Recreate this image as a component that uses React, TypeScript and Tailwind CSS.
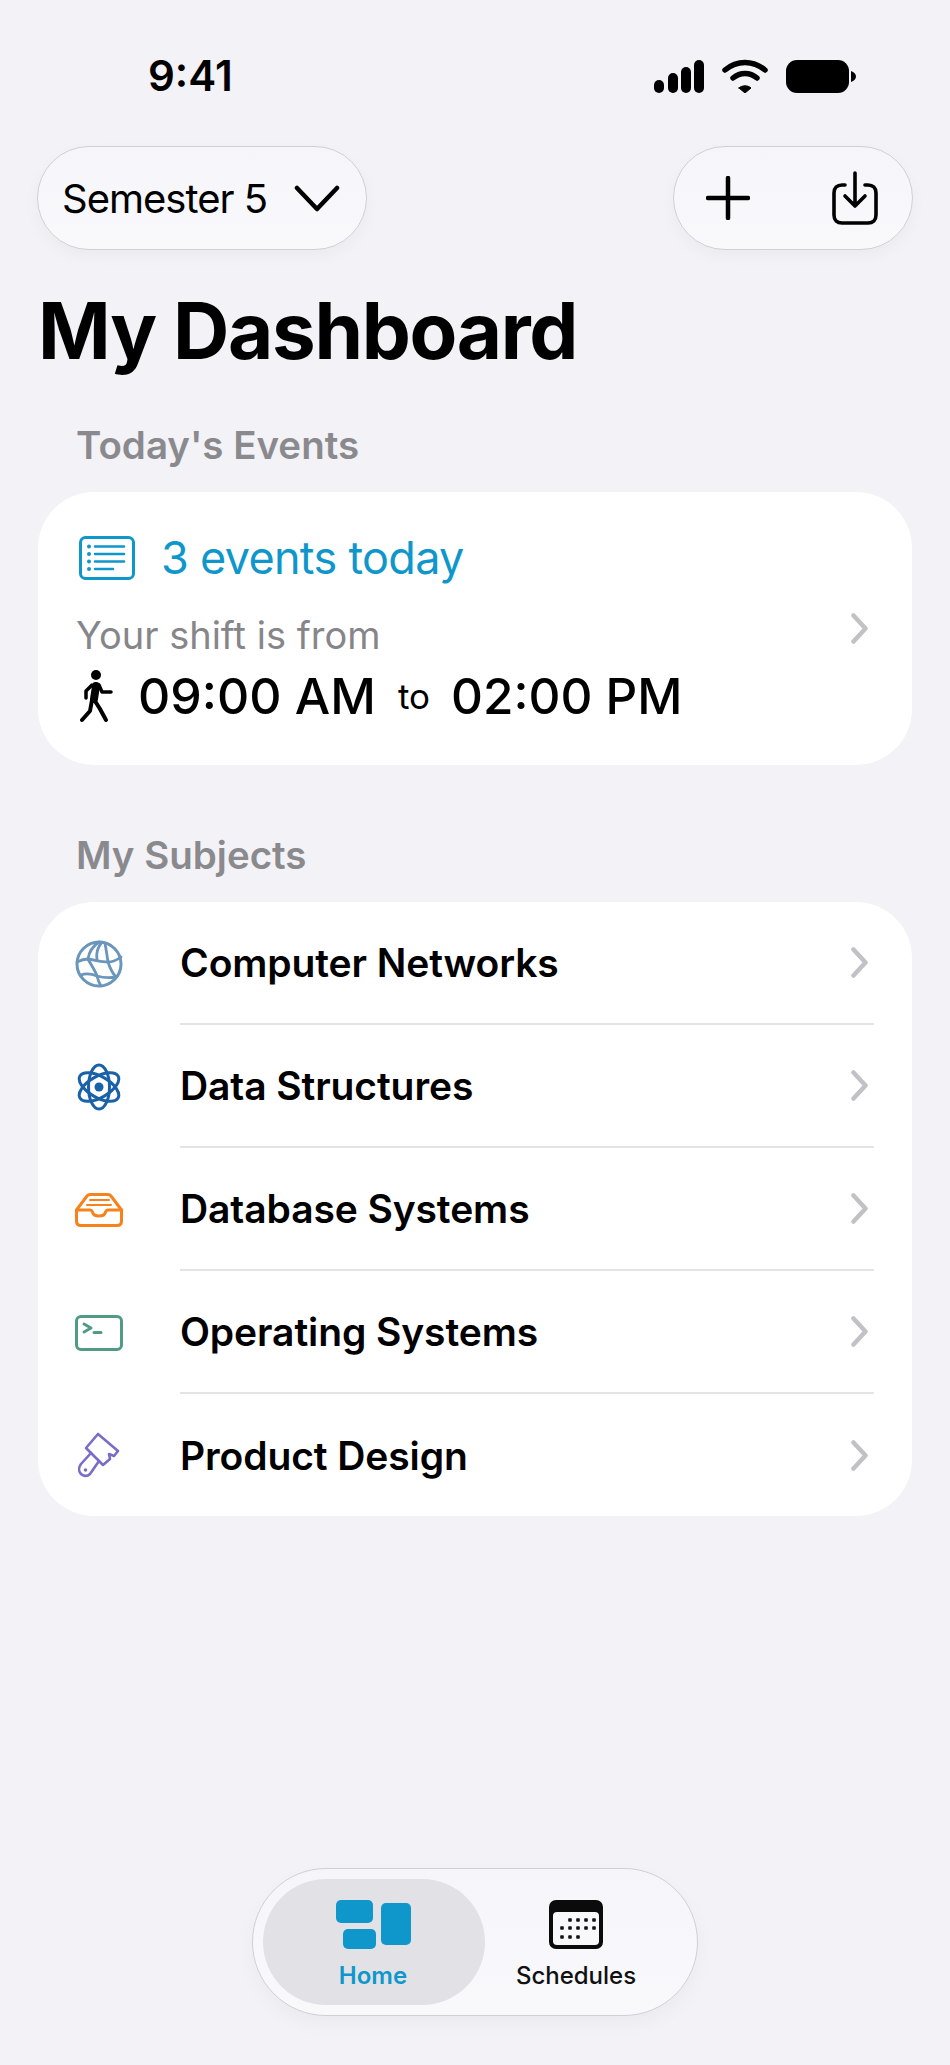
const subjects = [
  { name: "Computer Networks", icon: <GlobeIcon /> },
  { name: "Data Structures", icon: <AtomIcon /> },
  { name: "Database Systems", icon: <TrayIcon /> },
  { name: "Operating Systems", icon: <TerminalIcon /> },
  { name: "Product Design", icon: <BrushIcon /> },
];

function Chevron() {
  return (
    <svg width="17" height="31" viewBox="0 0 17 31" fill="none" stroke="#c2c2c6" strokeWidth="4.500" strokeLinecap="round" strokeLinejoin="round">
      <path d="m2.500 2.500 12 13-12 13" />
    </svg>
  );
}

function GlobeIcon() {
  return (
    <svg width="48" height="48" viewBox="0 0 48 48" fill="none" stroke="#6b96bb" strokeWidth="2.800" strokeLinecap="round">
      <circle cx="24" cy="24" r="22" strokeWidth="3" />
      <path d="M24 2C18 6 14 12 13 19M30 3c1 6 2 12 3 19" />
      <path d="M2 22c4-2 8-3 11-3 7 1 13 3 20 3 5 0 9-2 13-5" />
      <path d="M13 19c3 6 7 11 9 17 1 4 2 7 4 10M33 22c2 6 4 11 8 15" />
      <path d="M6 35c5-2 11-1 16 1 7 2 13 2 19 1M22 20c-1-6 0-12 5-18" />
    </svg>
  );
}

function AtomIcon() {
  return (
    <svg width="44" height="48" viewBox="0 0 44 48" fill="none" stroke="#1a62a8" strokeWidth="3">
      <ellipse cx="22" cy="24" rx="10.500" ry="22" />
      <ellipse cx="22" cy="24" rx="10.500" ry="22" transform="rotate(60 22 24)" />
      <ellipse cx="22" cy="24" rx="10.500" ry="22" transform="rotate(-60 22 24)" />
      <circle cx="22" cy="24" r="4.500" fill="#1a62a8" stroke="none" />
    </svg>
  );
}

function TrayIcon() {
  return (
    <svg width="48" height="34" viewBox="0 0 48 34" fill="none" stroke="#f7821b" strokeWidth="3" strokeLinejoin="round" strokeLinecap="round">
      <path d="M1.500 17 12 3c.8-1 1.500-1.500 3-1.500h18c1.500 0 2.200.5 3 1.500l10.500 14v11c0 3-1.500 4.500-4.500 4.500H6c-3 0-4.500-1.500-4.500-4.500z" />
      <path d="M1.500 17H15c1.500 0 2 1 2.500 2.200.8 2.500 3 3.800 6.500 3.800s5.700-1.300 6.500-3.800c.5-1.200 1-2.200 2.500-2.200h14" />
      <path d="M15 7h19M12 12h24" strokeWidth="2" />
    </svg>
  );
}

function TerminalIcon() {
  return (
    <svg width="48" height="36" viewBox="0 0 48 36" fill="none" stroke="#4f9b84" strokeWidth="3" strokeLinecap="round" strokeLinejoin="round">
      <rect x="1.500" y="1.500" width="45" height="33" rx="4.500" />
      <path d="m9 9 7 4-7 4M19 17.500h7" />
    </svg>
  );
}

function BrushIcon() {
  return (
    <svg width="42" height="46" viewBox="0 0 42 46" fill="none" stroke="#7b6cc8" strokeWidth="2.600" strokeLinejoin="round" strokeLinecap="round">
      <path d="M20 2 40 19l-4 5-5-2 1 5-7 6L8 16z" />
      <path d="M13 21 3 32c-3 4-2 8 0 10s6 3 9 0l9-13" />
      <circle cx="7.500" cy="38" r="1.800" fill="#7b6cc8" stroke="none" />
    </svg>
  );
}

function WalkIcon() {
  return (
    <svg width="33" height="53" viewBox="0 0 33 53" fill="none" stroke="#000" strokeLinecap="round" strokeLinejoin="round">
      <circle cx="16" cy="5" r="5" fill="#000" stroke="none" />
      <path d="M16 16 14 29" strokeWidth="8" />
      <path d="M12 15 6 21v7" strokeWidth="3.500" />
      <path d="m19 15 3 7h9" strokeWidth="3.500" />
      <path d="m12 30-2 11-8 9" strokeWidth="4" />
      <path d="m15 31 5 8 6 11" strokeWidth="4" />
    </svg>
  );
}

function HomeIcon() {
  return (
    <svg width="75" height="49" viewBox="0 0 75 49" fill="#0f97cb">
      <rect x="0" y="0" width="37" height="23" rx="5" />
      <rect x="7" y="29" width="33" height="20" rx="5" />
      <rect x="45" y="3" width="30" height="42" rx="5" />
    </svg>
  );
}

function CalendarIcon() {
  const dots = [
    [21, 20], [29, 20], [37, 20], [45, 20],
    [13, 28], [21, 28], [29, 28], [37, 28], [45, 28],
    [13, 37], [21, 37], [29, 37],
  ];
  return (
    <svg width="54" height="49" viewBox="0 0 54 49">
      <rect x="0" y="0" width="54" height="49" rx="7" fill="#0b0b0b" />
      <rect x="4" y="12" width="46" height="33" rx="4" fill="#f8f8fb" />
      {dots.map(([x, y]) => (
        <rect key={`${x}-${y}`} x={x - 1.800} y={y - 1.800} width="3.600" height="3.600" rx="0.800" fill="#111" />
      ))}
    </svg>
  );
}

function Row({ name, icon, last }: { name: string; icon: React.ReactNode; last: boolean }) {
  return (
    <div className={`flex items-stretch ${last ? "h-[122px]" : "h-[123px]"}`}>
      <div className="flex w-[142px] items-center justify-center pr-[20px]">{icon}</div>
      <div className={`flex flex-1 items-center justify-between pr-[6px] ${last ? "" : "border-b-2 border-[#e4e4e7]"}`}>
        <span className="pt-[2px] text-[39px] font-semibold tracking-[-0.1px] text-black">{name}</span>
        <Chevron />
      </div>
    </div>
  );
}

export default function App() {
  return (
    <div className="flex h-[2065px] w-[950px] flex-col bg-[#f2f2f7] font-['Inter',sans-serif] text-black">
      {/* status bar */}
      <div className="flex h-[146px] items-start justify-between pl-[148px] pr-[94px] pt-[51px]">
        <span className="text-[42px] font-semibold leading-[50px]">9:41</span>
        <div className="flex items-center gap-[18px] pt-[8px]">
          <svg width="50" height="33" viewBox="0 0 50 33" fill="#000">
            <rect x="0" y="20" width="10" height="13" rx="5" />
            <rect x="14" y="13" width="10" height="20" rx="5" />
            <rect x="27" y="7" width="10" height="26" rx="5" />
            <rect x="40" y="0" width="10" height="33" rx="5" />
          </svg>
          <svg width="46" height="34" viewBox="0 0 46 34" fill="none" stroke="#000" strokeWidth="5.500" strokeLinecap="round">
            <path d="M3 11c12-10 28-10 40 0" />
            <path d="M11 19c7-6 17-6 24 0" />
            <path d="M17 29l6 5 6-5c-3-3-9-3-12 0z" fill="#000" strokeWidth="1" />
          </svg>
          <svg width="70" height="33" viewBox="0 0 70 33" fill="#000">
            <rect x="0" y="0" width="63" height="33" rx="11" />
            <path d="M65 11c3 1 5 3 5 5.500S68 21 65 22z" />
          </svg>
        </div>
      </div>

      {/* toolbar */}
      <div className="flex items-center justify-between px-[37px]">
        <div className="flex h-[104px] w-[330px] items-center gap-[27px] rounded-[52px] border border-[#cfcfd4] bg-linear-to-b from-[#f6f6fa] to-[#f9f9fc] pl-[24px] shadow-[0_6px_16px_rgba(0,0,0,0.035)]">
          <span className="pt-[2px] text-[40px] leading-none tracking-[-1px]">Semester 5</span>
          <svg className="mt-[2px]" width="46" height="28" viewBox="0 0 46 28" fill="none" stroke="#000" strokeWidth="4.500" strokeLinecap="round" strokeLinejoin="round">
            <path d="m3 3 20 21L43 3" />
          </svg>
        </div>
        <div className="flex h-[104px] w-[240px] items-center justify-between rounded-[52px] border border-[#cfcfd4] bg-linear-to-b from-[#f6f6fa] to-[#f9f9fc] pl-[32px] pr-[34px] shadow-[0_6px_16px_rgba(0,0,0,0.035)]">
          <svg width="44" height="44" viewBox="0 0 44 44" fill="none" stroke="#000" strokeWidth="4.500" strokeLinecap="round">
            <path d="M22 2v40M2 22h40" />
          </svg>
          <svg width="46" height="54" viewBox="0 0 46 54" fill="none" stroke="#000" strokeWidth="3.600" strokeLinecap="round" strokeLinejoin="round">
            <path d="M13 14H10c-5 0-8 3-8 8v22c0 5 3 8 8 8h26c5 0 8-3 8-8V22c0-5-3-8-8-8h-3" />
            <path d="M23 2v33M13 25l10 10 10-10" />
          </svg>
        </div>
      </div>

      <h1 className="ml-[38px] mt-[36px] text-[78px] font-bold leading-[90px] tracking-[-1.300px]">My Dashboard</h1>

      <h2 className="ml-[76px] mt-[44px] text-[38.500px] font-semibold leading-[50px] text-[#8a8a8e]">Today's Events</h2>

      {/* events card */}
      <div className="mx-[38px] mt-[22px] flex h-[273px] items-center justify-between rounded-[56px] bg-white pl-[38px] pr-[44px]">
        <div className="flex flex-col pt-[1px]">
          <div className="flex items-center gap-[26px] pl-[3px]">
            <svg width="56" height="44" viewBox="0 0 56 44" fill="none" stroke="#0f97cb" strokeWidth="3" strokeLinecap="round">
              <rect x="1.500" y="1.500" width="53" height="41" rx="5" />
              <path d="M16 10.500h29M16 18h29M16 25.500h29M16 33h18" strokeWidth="2.600" />
              <g fill="#0f97cb" stroke="none">
                <circle cx="10" cy="10.500" r="2" />
                <circle cx="10" cy="18" r="2" />
                <circle cx="10" cy="25.500" r="2" />
                <circle cx="10" cy="33" r="2" />
              </g>
            </svg>
            <span className="text-[45px] leading-[52px] tracking-[-0.7px] text-[#0f97cb]">3 events today</span>
          </div>
          <span className="mt-[28px] text-[38px] leading-[46px] text-[#86868a]">Your shift is from</span>
          <div className="mt-[8px] flex items-center">
            <div className="pl-[4px]">
              <WalkIcon />
            </div>
            <span className="ml-[25px] text-[50px] font-medium leading-[60px]">09:00 AM</span>
            <span className="ml-[22px] text-[35px] leading-[60px]">to</span>
            <span className="ml-[21px] text-[49.500px] font-medium leading-[60px]">02:00 PM</span>
          </div>
        </div>
        <Chevron />
      </div>

      <h2 className="ml-[76px] mt-[65px] text-[38.500px] font-semibold leading-[50px] text-[#8a8a8e]">My Subjects</h2>

      {/* subject list */}
      <div className="mx-[38px] mt-[22px] rounded-[56px] bg-white pr-[38px]">
        {subjects.map((s, i) => (
          <Row key={s.name} name={s.name} icon={s.icon} last={i === subjects.length - 1} />
        ))}
      </div>

      {/* tab bar */}
      <div className="mt-auto flex justify-center pb-[49px]">
        <div className="flex h-[148px] w-[446px] items-center rounded-[74px] border border-[#cfcfd4] bg-linear-to-b from-[#f6f6fa] to-[#f9f9fc] pl-[10px] shadow-[0_8px_20px_rgba(0,0,0,0.035)]">
          <div className="flex h-[126px] w-[222px] flex-col items-center justify-center gap-[12px] rounded-[63px] bg-[#e2e2e6] pr-[2px] pt-[6px]">
            <HomeIcon />
            <span className="text-[24px] font-semibold leading-[30px] text-[#0f97cb]">Home</span>
          </div>
          <div className="flex flex-1 flex-col items-center justify-center gap-[12px] pr-[30px] pt-[6px]">
            <CalendarIcon />
            <span className="text-[24px] font-medium leading-[30px] text-[#111]">Schedules</span>
          </div>
        </div>
      </div>
    </div>
  );
}
